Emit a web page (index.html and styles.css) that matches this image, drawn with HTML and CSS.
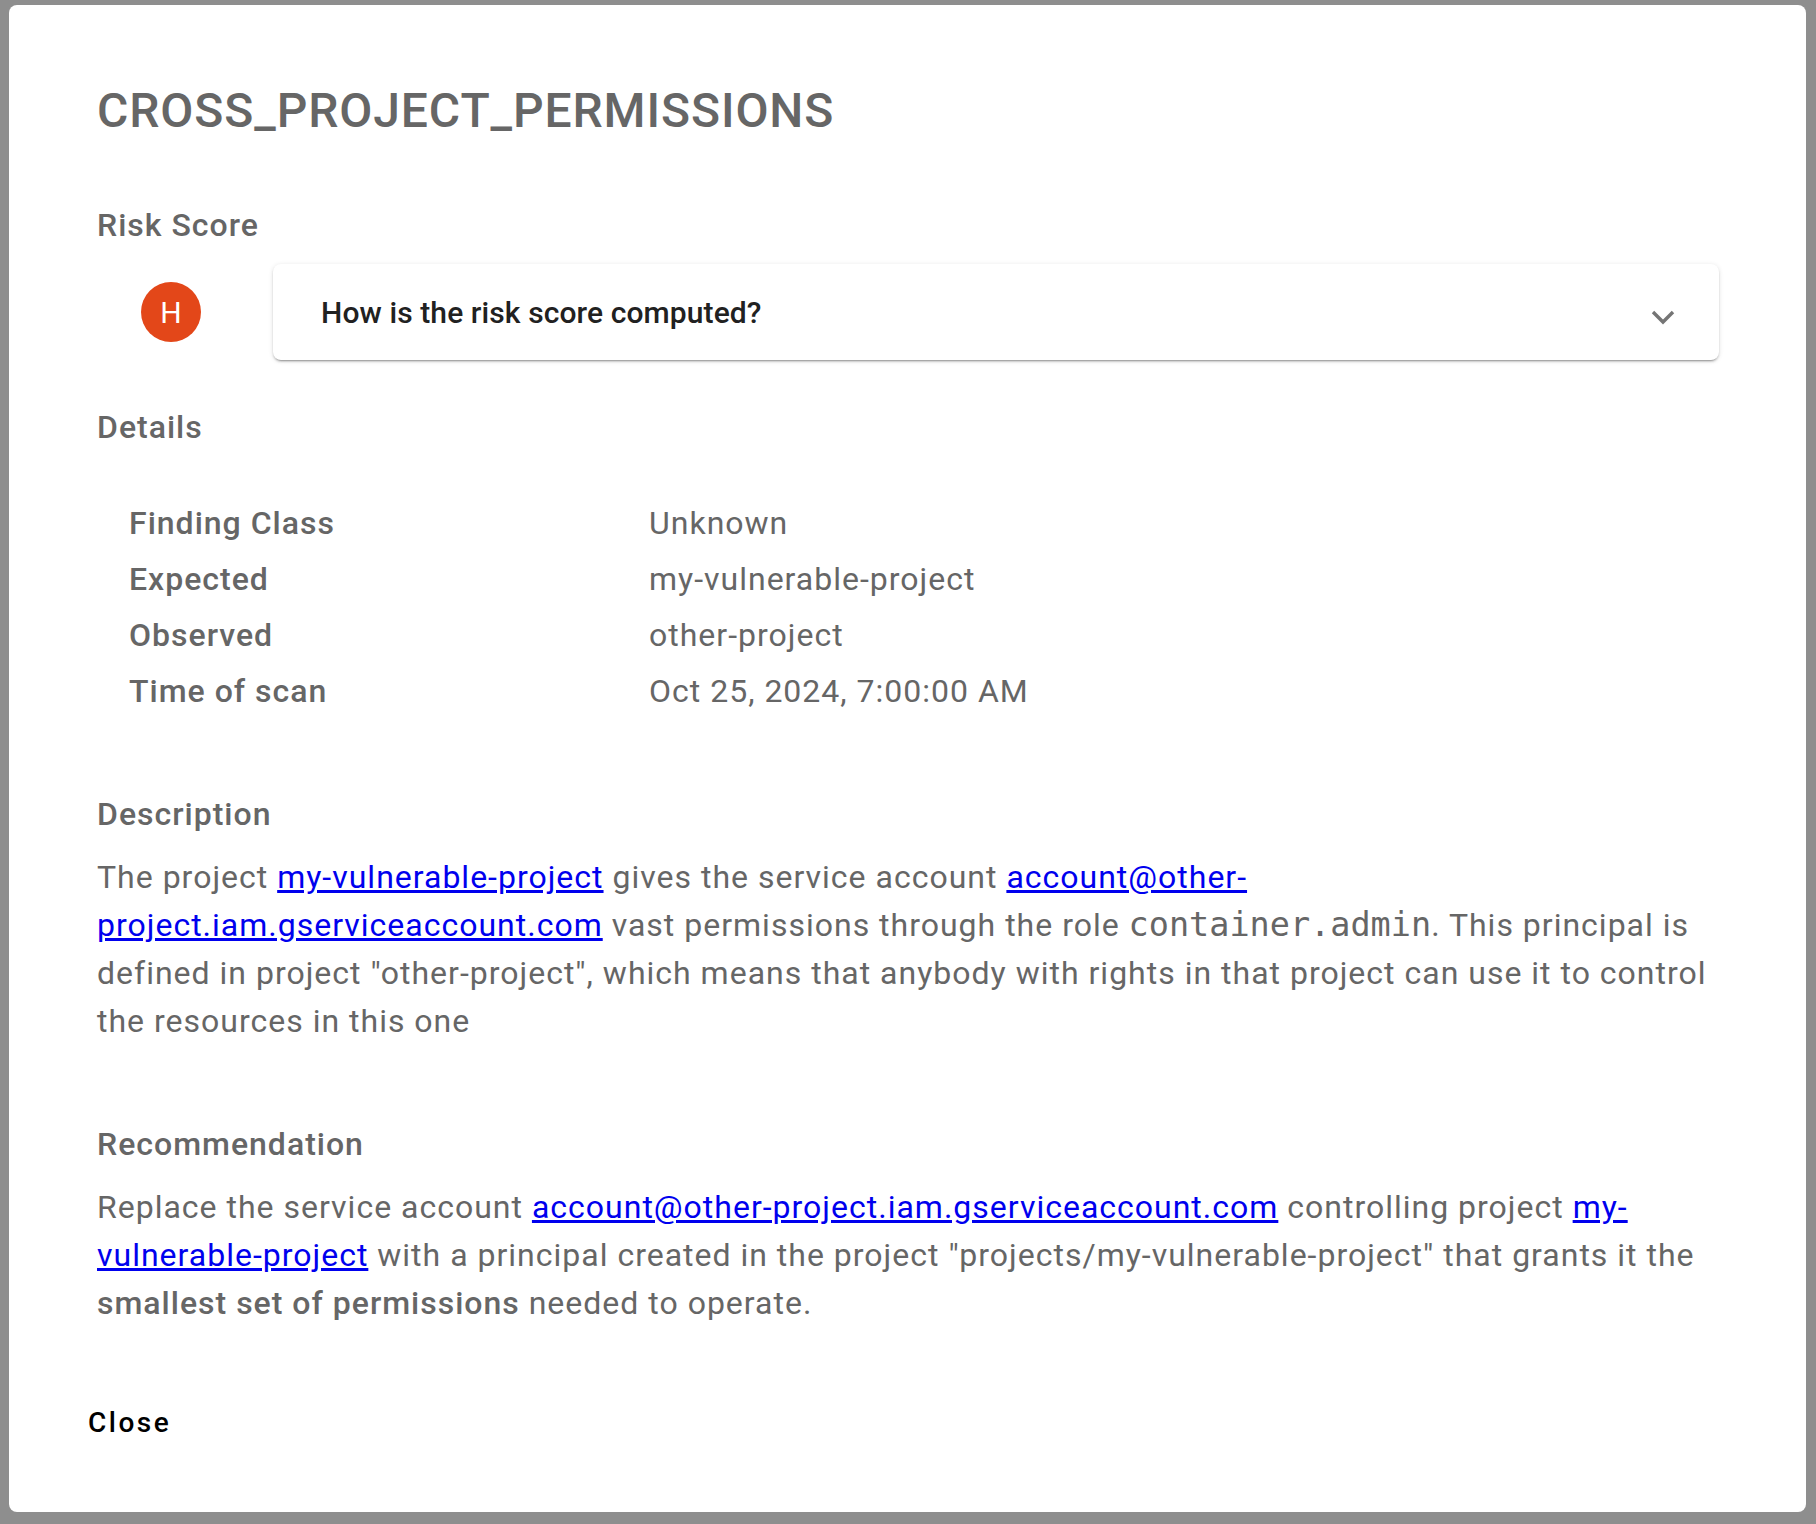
FILE: index.html
```html
<!DOCTYPE html>
<html lang="en">
<head>
<meta charset="utf-8">
<title>CROSS_PROJECT_PERMISSIONS</title>
<link rel="stylesheet" href="styles.css">
</head>
<body>
<div class="dialog">
  <div class="content">
    <h1 class="title">CROSS_PROJECT_PERMISSIONS</h1>

    <h2 class="section-title risk-title">Risk Score</h2>
    <div class="risk-row">
      <div class="avatar-cell"><span class="avatar">H</span></div>
      <div class="panel">
        <span class="panel-title">How is the risk score computed?</span>
        <svg class="chevron" width="24" height="16" viewBox="0 0 24 16"><polyline points="2,3 12,13 22,3" fill="none" stroke="#757575" stroke-width="3.4"/></svg>
      </div>
    </div>

    <h2 class="section-title details-title">Details</h2>
    <div class="details">
      <div class="d-label">Finding Class</div><div class="d-value">Unknown</div>
      <div class="d-label">Expected</div><div class="d-value">my-vulnerable-project</div>
      <div class="d-label">Observed</div><div class="d-value">other-project</div>
      <div class="d-label">Time of scan</div><div class="d-value">Oct 25, 2024, 7:00:00 AM</div>
    </div>

    <h2 class="section-title desc-title">Description</h2>
    <p class="text">The project <a href="#">my-vulnerable-project</a> gives the service account <a href="#">account@other-project.iam.gserviceaccount.com</a> vast permissions through the role <code class="mono">container.admin</code>. This principal is defined in project "other-project", which means that anybody with rights in that project can use it to control the resources in this one</p>

    <h2 class="section-title rec-title">Recommendation</h2>
    <p class="text">Replace the service account <a href="#">account@other-project.iam.gserviceaccount.com</a> controlling project <a href="#">my-vulnerable-project</a> with a principal created in the project "projects/my-vulnerable-project" that grants it the <strong>smallest set of permissions</strong> needed to operate.</p>
  </div>
  <div class="actions">
    <button class="close-btn" type="button">Close</button>
  </div>
</div>
</body>
</html>
```

FILE: styles.css
```css
html, body {
  margin: 0;
  padding: 0;
}
body {
  background: #8e8e8e;
  padding: 5px 10px 12px 9px;
  font-family: Roboto, "Liberation Sans", Arial, sans-serif;
  color: #666666;
}
.dialog {
  background: #ffffff;
  border-radius: 8px;
  height: 1507px;
  box-sizing: border-box;
  padding: 78px 0 0 0;
  display: flex;
  flex-direction: column;
}
.content {
  padding: 0 87px 0 88px;
}
.title {
  margin: 0;
  font-size: 48px;
  line-height: 56px;
  font-weight: 500;
  letter-spacing: 0.9px;
  color: #666666;
}
.section-title {
  margin: 0;
  font-size: 32px;
  line-height: 48px;
  font-weight: 500;
  letter-spacing: 1px;
  color: #666666;
}
.risk-title { margin-top: 62px; }
.risk-row {
  margin-top: 15px;
  display: flex;
  align-items: center;
}
.avatar-cell {
  width: 148px;
  display: flex;
  justify-content: center;
  margin-right: 28px;
}
.avatar {
  width: 60px;
  height: 60px;
  border-radius: 50%;
  background: #e34719;
  color: #ffffff;
  font-size: 30px;
  display: flex;
  align-items: center;
  justify-content: center;
}
.panel {
  flex: 1;
  height: 96px;
  border-radius: 8px;
  background: #ffffff;
  box-shadow: 0 3px 1px -2px rgba(0,0,0,.2), 0 2px 2px 0 rgba(0,0,0,.14), 0 1px 5px 0 rgba(0,0,0,.12);
  display: flex;
  align-items: center;
  justify-content: space-between;
  padding: 0 44px 0 48px;
  box-sizing: border-box;
}
.panel-title {
  font-size: 30px;
  font-weight: 500;
  letter-spacing: 0.1px;
  color: #212121;
}
.chevron {
  display: block;
  margin-top: 10px;
}
.details-title { margin-top: 43px; }
.details {
  margin-top: 44px;
  display: grid;
  grid-template-columns: 520px 1fr;
  padding-left: 32px;
}
.d-label, .d-value {
  font-size: 32px;
  line-height: 48px;
  letter-spacing: 1px;
  padding: 4px 0;
}
.d-label { font-weight: 500; }
.desc-title { margin-top: 71px; }
.rec-title { margin-top: 75px; }
.text {
  margin: 15px 0 0 0;
  font-size: 32px;
  line-height: 48px;
  letter-spacing: 1px;
  color: #666666;
}
.text a {
  color: #0000ee;
  text-decoration: underline;
}
.text strong { font-weight: 500; }
.mono {
  font-family: "DejaVu Sans Mono", "Liberation Mono", monospace;
  font-size: 33.5px;
  letter-spacing: 0;
}
.actions {
  margin-top: auto;
  padding: 0 0 71px 63px;
}
.close-btn {
  background: transparent;
  border: none;
  padding: 0 16px;
  height: 36px;
  font-family: Roboto, "Liberation Sans", Arial, sans-serif;
  font-size: 28px;
  font-weight: 500;
  letter-spacing: 2.5px;
  color: #000000;
  line-height: 36px;
}
```
